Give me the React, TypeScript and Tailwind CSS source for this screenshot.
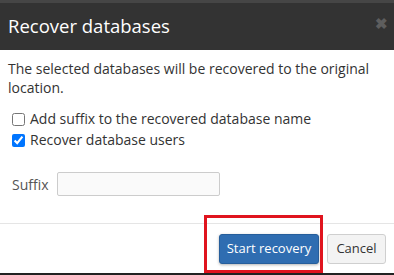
import React from "react";

export default function App() {
  return (
    <div
      className="w-[394px] h-[275px] bg-white flex flex-col overflow-hidden text-[#333]"
      style={{ fontFamily: '"Open Sans", sans-serif' }}
    >
      <div className="h-[3px] bg-[#464646]" />
      <div className="h-[47px] bg-[#333333] flex items-center justify-between pl-[8px] pr-[6px]">
        <h4 className="text-white text-[18.5px] leading-none font-normal">Recover databases</h4>
        <span className="self-start mt-[13px] text-[#5e5e5e] text-[15px] font-bold leading-none">✖</span>
      </div>

      <div className="flex flex-col px-[8px] pt-[9px]">
        <p className="text-[14px] leading-[19px]">
          The selected databases will be recovered to the original location.
        </p>

        <label className="flex items-center gap-[5px] mt-[12px] pl-[4px] text-[14px] leading-[20px]">
          <input type="checkbox" className="w-[13px] h-[13px] m-0" />
          Add suffix to the recovered database name
        </label>
        <label className="flex items-center gap-[5px] mt-[1px] pl-[4px] text-[14px] leading-[20px]">
          <input type="checkbox" defaultChecked className="w-[13px] h-[13px] m-0 accent-[#0075ff]" />
          Recover database users
        </label>

        <div className="flex items-center gap-[8px] mt-[22px] pl-[4px] text-[14px]">
          <span className="text-[#555]">Suffix</span>
          <div className="w-[163px] h-[24px] border border-[#ccc] bg-[#fafafa] rounded-[2px]" />
        </div>
      </div>

      <div className="mt-auto border-t border-[#e5e5e5] h-[50px] flex items-start justify-end pr-[8px] pt-[10px] gap-[8px]">
        <div className="relative">
          <div className="absolute -left-[15px] -top-[19px] w-[119px] h-[58px] border-[3px] border-[#e0141e]" />
          <button className="w-[100px] h-[30px] bg-[#2f6db1] text-white text-[13px] rounded-[3px] border border-[#265e9b] shadow-[0_1px_3px_rgba(0,0,0,0.3)]">
            Start recovery
          </button>
        </div>
        <button className="w-[59px] h-[30px] bg-[#f3f3f3] text-[#333] text-[13px] rounded-[3px] border border-[#cfcfcf]">
          Cancel
        </button>
      </div>
      <div className="h-[2px] bg-[#222]" />
    </div>
  );
}
